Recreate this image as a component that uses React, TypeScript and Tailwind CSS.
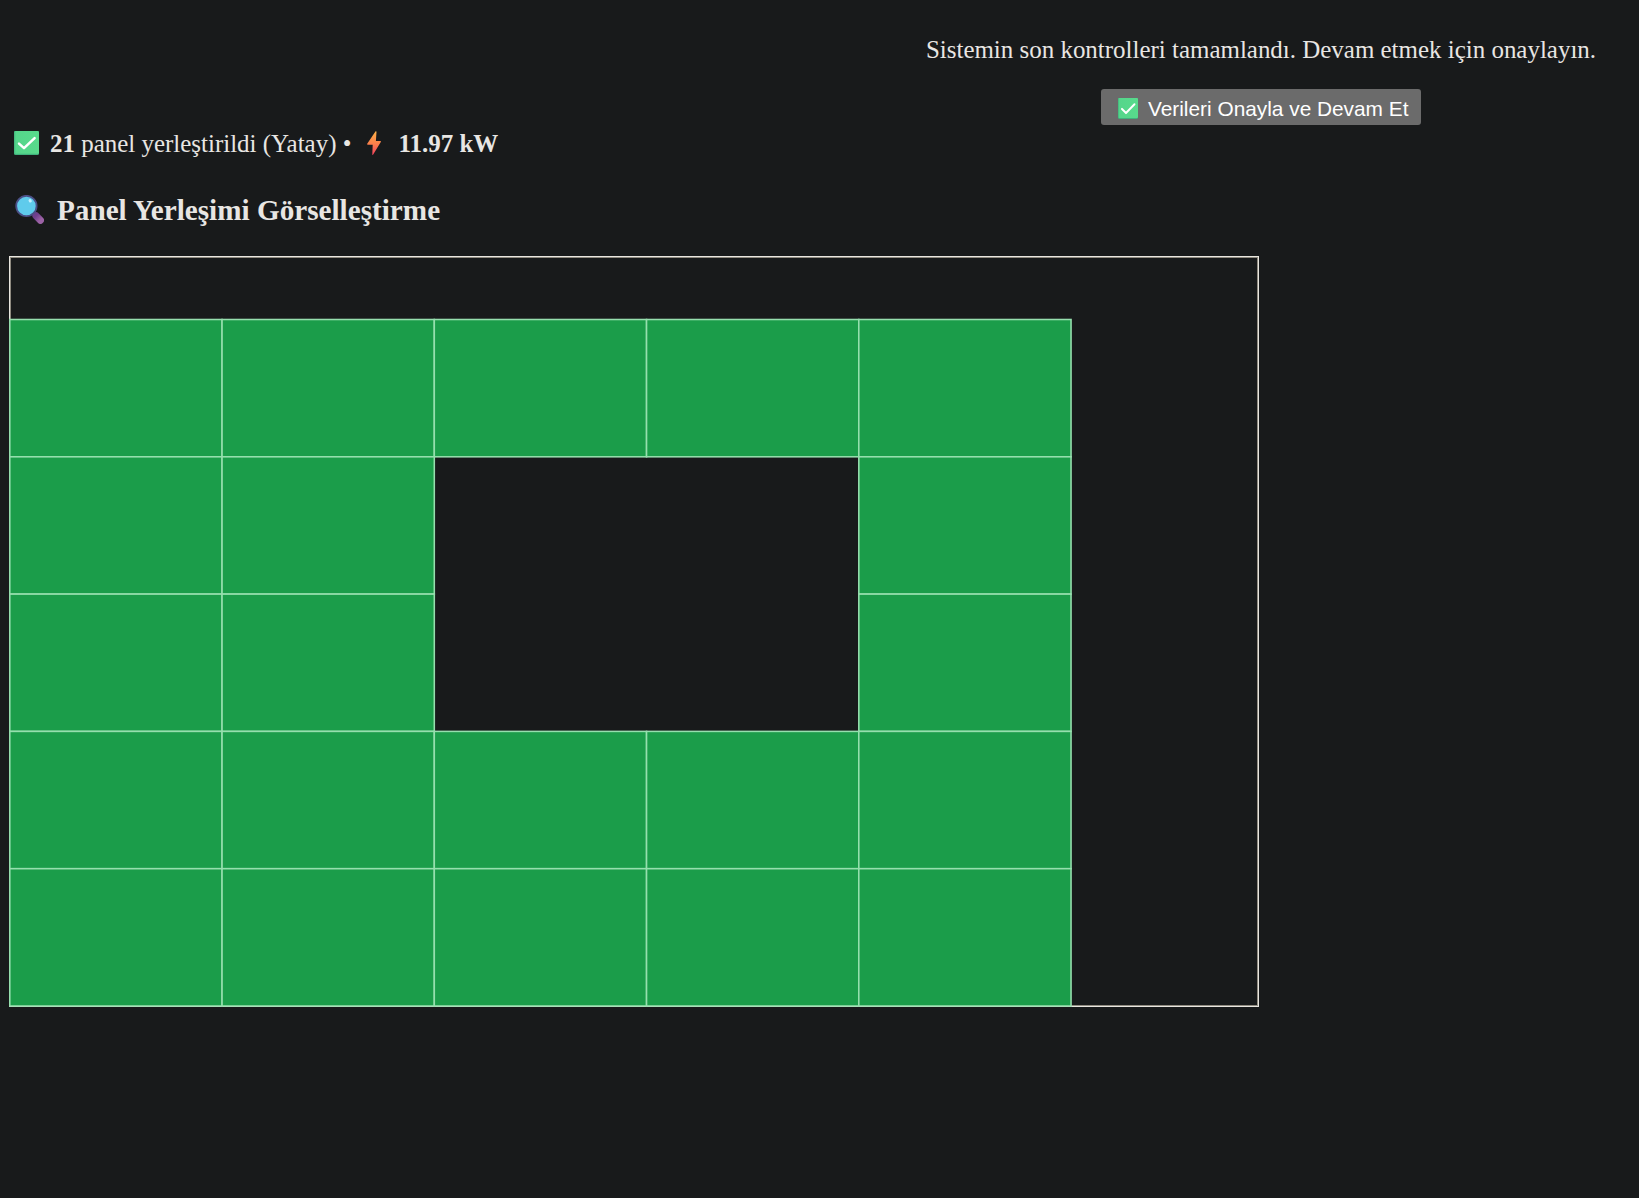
const CELL_W = 212.25;
const CELL_H = 137.3;
const LEFT = 0.8;
const TOP = 63.5;

// 1 = panel placed, 0 = blocked area of the roof
const LAYOUT = [
  [1, 1, 1, 1, 1],
  [1, 1, 0, 0, 1],
  [1, 1, 0, 0, 1],
  [1, 1, 1, 1, 1],
  [1, 1, 1, 1, 1],
];

function CheckIcon({ className, id }: { className: string; id: string }) {
  return (
    <svg className={className} viewBox="0 0 25 24" preserveAspectRatio="none" aria-hidden="true">
      <defs>
        <linearGradient id={id} x1="0" y1="0" x2="1" y2="0">
          <stop offset="0" stopColor="#40b57d" />
          <stop offset="0.08" stopColor="#55d68b" />
          <stop offset="1" stopColor="#58da8c" />
        </linearGradient>
      </defs>
      <rect width="25" height="24" rx="1.6" fill="#40b27d" />
      <rect width="25" height="22.8" rx="1.4" fill={`url(#${id})`} />
      <path d="M5 12.6 10 17.2 20.6 7.2" fill="none" stroke="#fff" strokeWidth="2.5" strokeLinecap="round" strokeLinejoin="round" />
    </svg>
  );
}

function BoltIcon() {
  return (
    <svg className="block h-6 w-[14px]" viewBox="0 0 14 24" aria-hidden="true">
      <defs>
        <linearGradient id="bolt" x1="0" y1="0" x2="0" y2="1">
          <stop offset="0" stopColor="#fcb247" />
          <stop offset="0.55" stopColor="#fb7d4b" />
          <stop offset="1" stopColor="#f2415f" />
        </linearGradient>
      </defs>
      <path d="M8.6.3C9 0 9.6.2 9.5.8L8.9 10H13.3c.6 0 .9.6.5 1.1L6.2 23.6c-.4.6-1 .4-.9-.3L5.7 13.8H.8c-.6 0-.9-.6-.6-1.1Z" fill="url(#bolt)" />
    </svg>
  );
}

function MagnifierIcon() {
  return (
    <svg className="-mt-px block h-[29px] w-[29px]" viewBox="0 0 29 29" aria-hidden="true">
      <defs>
        <linearGradient id="handle" x1="0" y1="0" x2="1" y2="1">
          <stop offset="0" stopColor="#6f3f8c" />
          <stop offset="1" stopColor="#9b62a5" />
        </linearGradient>
      </defs>
      <path d="M17.5 17.5 21 21" stroke="#54477f" strokeWidth="3" />
      <path d="m21 20.8 4.4 4.4" stroke="url(#handle)" strokeWidth="7.2" strokeLinecap="round" />
      <circle cx="11.4" cy="11" r="10.2" fill="#5fcbec" stroke="#4b4f86" strokeWidth="1.8" />
      <ellipse cx="15.2" cy="5.8" rx="1.5" ry="1.8" fill="#c4efff" transform="rotate(-35 15.2 5.8)" />
    </svg>
  );
}

function PanelMap() {
  return (
    <svg className="ml-[9px] mt-[27px] block h-[751px] w-[1250px]" viewBox="0 0 1250 751" role="img" aria-label="Panel Yerleşimi">
      <rect x="1" y="1" width="1248" height="749" fill="none" stroke="#8f8b80" strokeWidth="2" />
      <rect x="0.5" y="0.5" width="1249" height="750" fill="none" stroke="#e8e6e0" strokeWidth="1" />
      {LAYOUT.flatMap((row, r) =>
        row.map((on, c) =>
          on ? (
            <rect
              key={`${r}-${c}`}
              x={LEFT + c * CELL_W}
              y={TOP + r * CELL_H}
              width={CELL_W}
              height={CELL_H}
              fill="#1b9d4a"
              stroke="#96dfae"
              strokeWidth="1.56"
            />
          ) : null,
        ),
      )}
    </svg>
  );
}

export default function App() {
  return (
    <main className="flex h-[1198px] w-full flex-col overflow-hidden bg-[#181a1b] font-['Liberation_Serif',serif] text-[#e8e6e3]">
      <header className="flex h-[125px] w-[758px] flex-col items-center self-end pr-1.5 pt-[35px]">
        <div className="ml-2 flex flex-col items-center">
          <p className="whitespace-nowrap text-[24.96px] leading-[30px]">
            Sistemin son kontrolleri tamamlandı. Devam etmek için onaylayın.
          </p>
          <button className="mt-6 flex h-9 w-[320px] items-center rounded-[3px] bg-[#6b6b6b] pl-[17px] font-['Liberation_Sans',sans-serif] text-[20.83px] text-white">
            <CheckIcon id="check-small" className="mt-[3px] block h-[21px] w-5" />
            <span className="ml-[10px] mt-1 whitespace-nowrap">Verileri Onayla ve Devam Et</span>
          </button>
        </div>
      </header>
      <div className="flex h-[38px] items-center whitespace-nowrap pl-[14px] text-[24.96px] leading-[38px]">
        <CheckIcon id="check-large" className="-mt-0.5 block h-6 w-[25px]" />
        <span className="ml-[11px]">
          <b>21</b> panel yerleştirildi (Yatay) •
        </span>
        <span className="-mt-0.5 ml-4">
          <BoltIcon />
        </span>
        <b className="ml-[17px]">11.97 kW</b>
      </div>
      <h3 className="mt-7 flex h-[38px] items-center whitespace-nowrap pl-[15px] text-[29.2px] font-bold">
        <MagnifierIcon />
        <span className="ml-[13px] mt-0.5">Panel Yerleşimi Görselleştirme</span>
      </h3>
      <PanelMap />
    </main>
  );
}
